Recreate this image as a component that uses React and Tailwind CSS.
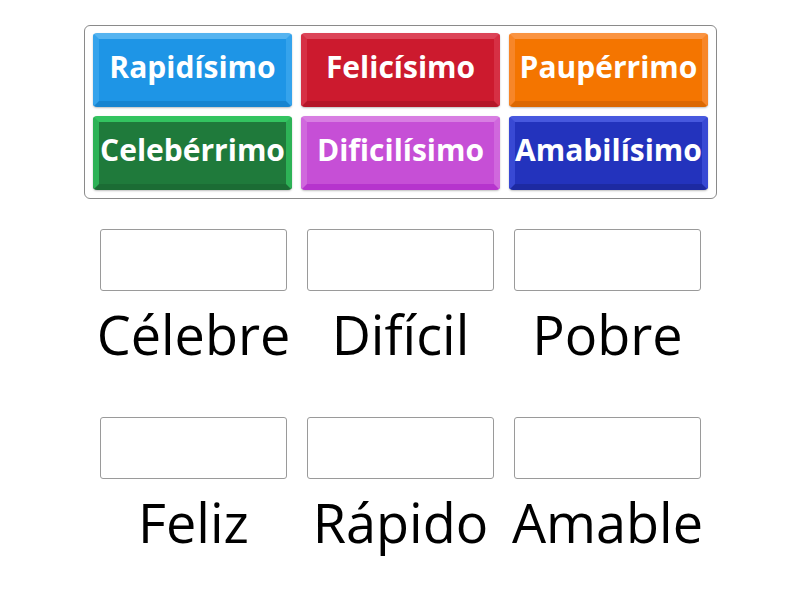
const tiles = [
  { label: 'Rapidísimo', cls: 'bg-[#1e95e6] border-t-[#56b4f0] border-x-[#35a3ec] border-b-[#1784d0]' },
  { label: 'Felicísimo', cls: 'bg-[#cc1a2e] border-t-[#dc4458] border-x-[#d63044] border-b-[#b41628]' },
  { label: 'Paupérrimo', cls: 'bg-[#f47500] border-t-[#fa9442] border-x-[#f78628] border-b-[#dc6800]' },
  { label: 'Celebérrimo', cls: 'bg-[#1f7a3b] border-t-[#33c460] border-x-[#2db256] border-b-[#1b6c34]' },
  { label: 'Dificilísimo', cls: 'bg-[#c64fd6] border-t-[#d87ee2] border-x-[#d068dd] border-b-[#b634cd]' },
  { label: 'Amabilísimo', cls: 'bg-[#2333bd] border-t-[#4758de] border-x-[#3849d4] border-b-[#1d2aa2]' },
];

const words = ['Célebre', 'Difícil', 'Pobre', 'Feliz', 'Rápido', 'Amable'];

export default function App() {
  return (
    <div className="w-[800px] h-[600px] bg-white font-['Open_Sans',sans-serif]">
      <div className="ml-[84px] pt-[25px]">
        <div className="w-[633px] border border-[#8a8a8a] rounded-md px-[8px] pt-[7px] pb-[8px] grid grid-cols-3 gap-[9px]">
          {tiles.map(t => (
            <div
              key={t.label}
              className={`h-[74px] rounded-[4px] border-t-[6px] border-b-[6px] border-x-[6px] pb-2 flex items-center justify-center text-white font-bold text-[30px] whitespace-nowrap shadow-[0_1px_2px_rgba(0,0,0,0.25)] ${t.cls}`}
            >
              {t.label}
            </div>
          ))}
        </div>
      </div>

      <div className="ml-[100px] mt-[30px] grid grid-cols-[187px_187px_187px] gap-x-[20px] gap-y-[46px]">
        {words.map(w => (
          <div key={w} className="flex flex-col">
            <div className="h-[62px] border border-[#9a9a9a] rounded-[3px] bg-white" />
            <div className="mt-[6px] flex justify-center whitespace-nowrap text-[54px] leading-[74px] text-black">
              {w}
            </div>
          </div>
        ))}
      </div>
    </div>
  );
}
